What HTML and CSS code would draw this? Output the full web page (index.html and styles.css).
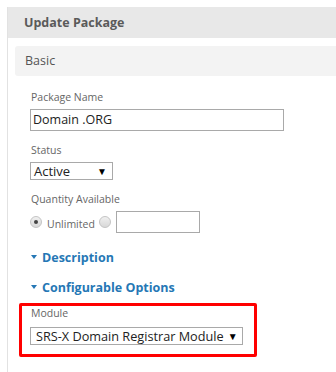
FILE: index.html
```html
<!DOCTYPE html>
<html>
<head>
<meta charset="utf-8">
<link rel="stylesheet" href="styles.css">
</head>
<body>
<div class="panel">
  <div class="panel-head">Update Package</div>
  <div class="panel-body">
    <div class="section-bar">Basic</div>
    <div class="form">
      <div class="field">
        <div class="label">Package Name</div>
        <div class="input wide">Domain .ORG</div>
      </div>
      <div class="field">
        <div class="label">Status</div>
        <div class="select status"><span>Active</span><span class="arrow">▼</span></div>
      </div>
      <div class="field">
        <div class="label">Quantity Available</div>
        <div class="qty">
          <span class="radio checked"></span>
          <span class="radio-label">Unlimited</span>
          <span class="radio"></span>
          <div class="input small"></div>
        </div>
      </div>
      <div class="toggle first"><span class="caret"></span>Description</div>
      <div class="toggle"><span class="caret"></span>Configurable Options</div>
      <div class="highlight">
        <div class="label">Module</div>
        <div class="select module"><span>SRS-X Domain Registrar Module</span><span class="arrow">▼</span></div>
      </div>
    </div>
  </div>
</div>
</body>
</html>
```

FILE: styles.css
```css
html, body {
  margin: 0;
  padding: 0;
  background: #fff;
  font-family: "Open Sans", "Liberation Sans", sans-serif;
  color: #555;
}
.panel {
  margin: 7px 0 0 7px;
  border-left: 1px solid #e2e2e2;
  height: 365px;
}
.panel-head {
  height: 31px;
  background: #e8e8e8;
  font-weight: bold;
  font-size: 12.5px;
  color: #5a5a5a;
  line-height: 31px;
  padding-left: 16px;
}
.panel-body {
  padding: 8px 0 0 7px;
}
.section-bar {
  height: 30px;
  line-height: 29px;
  background: #f3f3f3;
  border-radius: 3px 0 0 3px;
  font-size: 12.5px;
  color: #555;
  padding-left: 10px;
}
.form {
  padding: 13px 0 0 15px;
}
.field {
  margin-bottom: 11px;
}
.label {
  font-size: 10.5px;
  color: #666;
  line-height: 16px;
  margin-bottom: 4px;
  padding-left: 1px;
  white-space: nowrap;
}
.input {
  box-sizing: border-box;
  border: 1px solid #a9a9a9;
  background: #fff;
  height: 22px;
  font-size: 12.5px;
  line-height: 20px;
  color: #222;
  padding-left: 2px;
  white-space: nowrap;
}
.input.wide {
  width: 254px;
}
.input.small {
  width: 84px;
}
.select {
  box-sizing: border-box;
  display: flex;
  align-items: center;
  justify-content: space-between;
  border: 1px solid #a9a9a9;
  background: #fff;
  height: 18px;
  font-size: 13px;
  color: #222;
  padding: 0 5px 0 3px;
  white-space: nowrap;
}
.select.status {
  width: 83px;
}
.select.module {
  width: 213px;
  padding-left: 5px;
  font-size: 12.7px;
}
.arrow {
  font-size: 10px;
  color: #000;
  margin-left: 4px;
}
.qty {
  display: flex;
  align-items: center;
  height: 22px;
}
.radio {
  box-sizing: border-box;
  width: 12px;
  height: 12px;
  border-radius: 50%;
  border: 1px solid #c4c4c4;
  background: linear-gradient(#f0f0f0, #d8d8d8);
  position: relative;
  margin-top: -1px;
}
.radio.checked::after {
  content: "";
  position: absolute;
  left: 3px;
  top: 3px;
  width: 4px;
  height: 4px;
  border-radius: 50%;
  background: #444;
}
.radio-label {
  font-size: 10.5px;
  color: #666;
  margin: 4px 4px 0 5px;
}
.radio + .radio-label + .radio {
  margin-right: 5px;
}
.toggle {
  display: flex;
  align-items: center;
  font-size: 12.5px;
  font-weight: bold;
  color: #2577b5;
  height: 22px;
  margin-top: 8px;
  white-space: nowrap;
}
.toggle.first {
  margin-top: 13px;
}
.caret {
  width: 0;
  height: 0;
  border-left: 3px solid transparent;
  border-right: 3px solid transparent;
  border-top: 4px solid #2577b5;
  margin: 0 5px 0 1px;
}
.highlight {
  margin: 5px 0 0 -11px;
  width: 238px;
  box-sizing: border-box;
  height: 54px;
  border: 3px solid #f00;
  border-radius: 2px;
  padding: 0 0 0 8px;
}
.highlight .label {
  line-height: 14px;
  margin-bottom: 7px;
}
```
